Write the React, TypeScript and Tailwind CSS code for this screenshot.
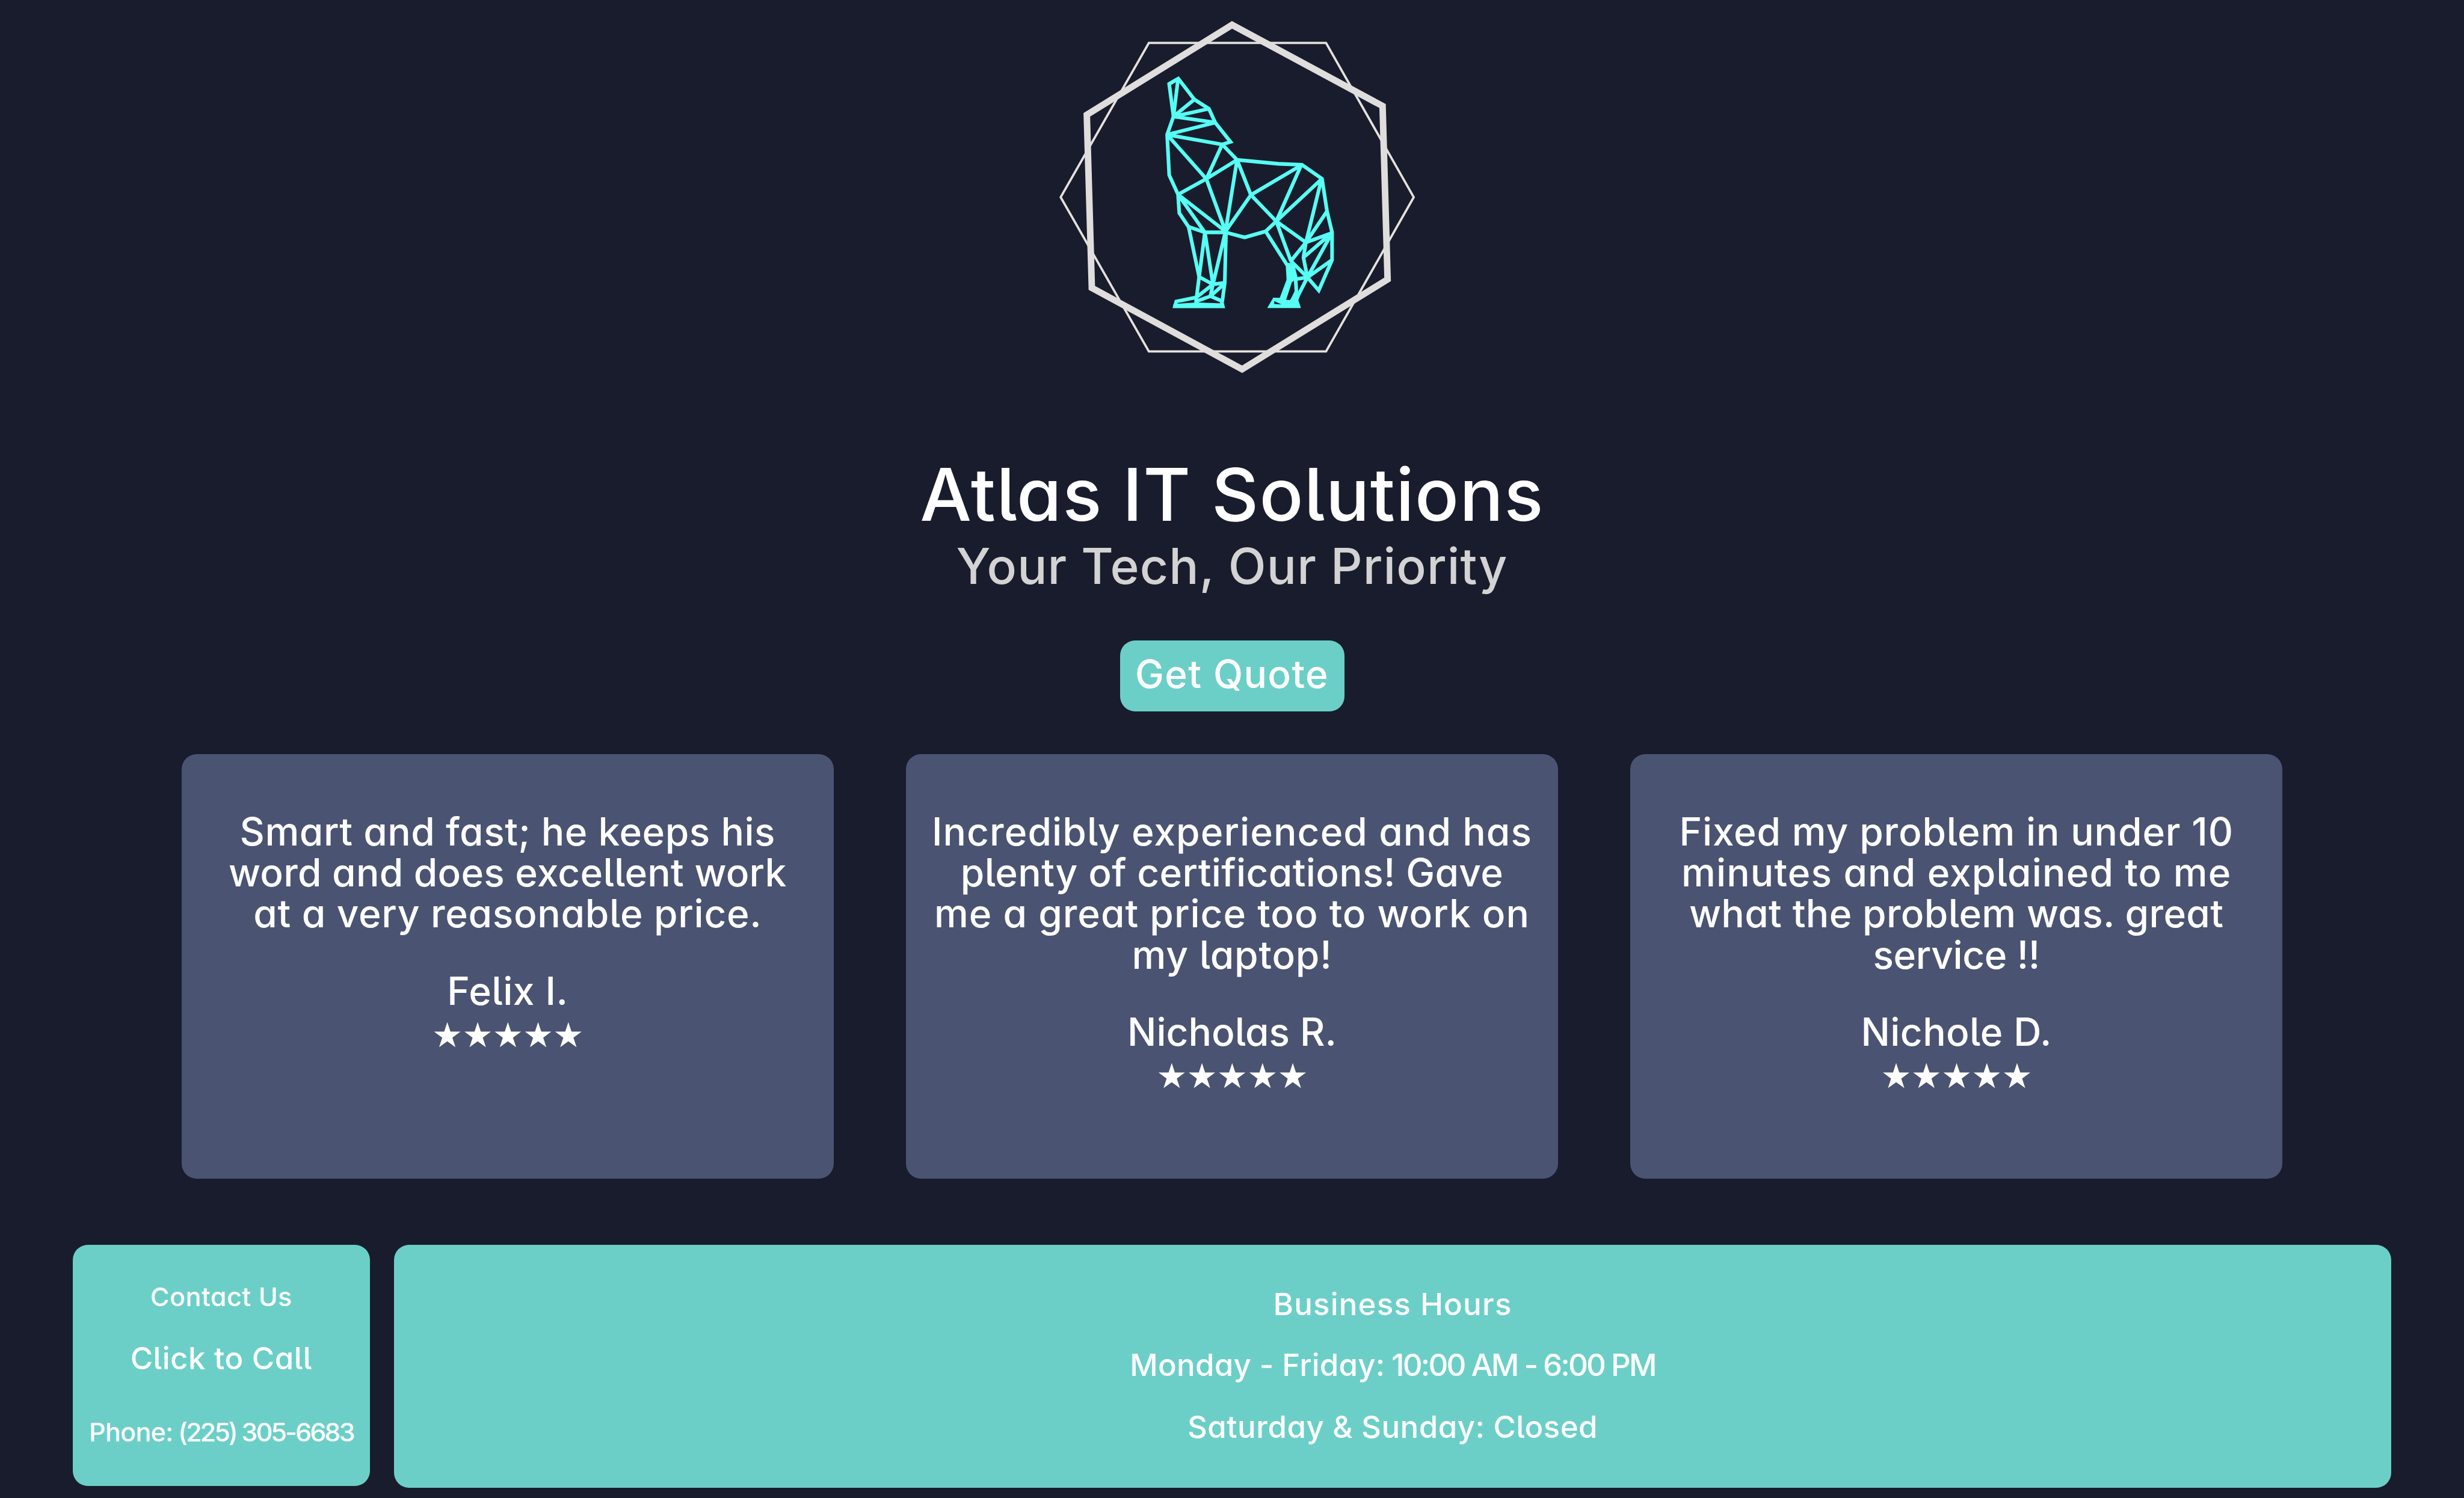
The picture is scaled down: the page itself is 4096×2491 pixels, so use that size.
type Line = { text: string; tracking: string };

type Review = { lines: Line[]; name: Line };

const reviews: Review[] = [
  {
    lines: [
      { text: "Smart and fast; he keeps his", tracking: "tracking-[0.53px]" },
      { text: "word and does excellent work", tracking: "tracking-[0.25px]" },
      { text: "at a very reasonable price.", tracking: "tracking-[0.7px]" },
    ],
    name: { text: "Felix I.", tracking: "tracking-[0.5px]" },
  },
  {
    lines: [
      { text: "Incredibly experienced and has", tracking: "tracking-[1.1px]" },
      { text: "plenty of certifications! Gave", tracking: "tracking-[0.35px]" },
      { text: "me a great price too to work on", tracking: "tracking-[1px]" },
      { text: "my laptop!", tracking: "tracking-[0.8px]" },
    ],
    name: { text: "Nicholas R.", tracking: "tracking-[0px]" },
  },
  {
    lines: [
      { text: "Fixed my problem in under 10", tracking: "tracking-[0.85px]" },
      { text: "minutes and explained to me", tracking: "tracking-[1.15px]" },
      { text: "what the problem was. great", tracking: "tracking-[0.35px]" },
      { text: "service !!", tracking: "tracking-[-0.4px]" },
    ],
    name: { text: "Nichole D.", tracking: "tracking-[0.4px]" },
  },
];

function WolfLogo() {
  return (
    <svg className="h-[655px] w-[655px]" viewBox="-22 0 1568 1568" fill="none" strokeMiterlimit={10}>
      <path d="M430 171H1135L1484 785L1135 1399H430L79 785Z" stroke="#e4e2dd" strokeWidth={9} />
      <path d="M761 99L1360 422L1380 1112L801 1470L203 1146L183 457Z" stroke="#dfdedc" strokeWidth={26} />
      <g stroke="#57fff4" strokeWidth={14.5} strokeLinejoin="bevel">
        {/* silhouette */}
        <path strokeLinejoin="miter" d="M510.7 334L547 313L611 396L669 433L694 488L755 565L722 575L781 636.5L945 652L1039 656L1119 711.6L1139 841L1159 925V1035L1106 1156L1061 1104" />
        <path strokeLinejoin="miter" d="M547 313L510.7 334L528 463.7L502.6 536L511 697L546 774L551 848L588 903L630 1102L620 1183" />
        <path d="M735 925L811 945L894.6 921L937 881" />
        {/* head and neck */}
        <path d="M546 316L528 463.7L611 396M669 433L528 463.7L694 488L502.6 536L722 575L658.7 712L502.6 536" />
        {/* torso */}
        <path d="M546 774L658.7 712L781 636.5L836 776L735 921L781 636.5M658.7 712L735 921L546 774L653 925L588 903M653 925H735" />
        <path d="M836 776L1036 658L937 881L836 776M1117 713L937 881L1055 965L1117 713" />
        {/* tail */}
        <path d="M1139 841L1055 965L1157 928L1045 1025L1061 1104L1157 930M1159 1035L1061 1104M1055 965L1045 1025" />
        {/* hind leg */}
        <path d="M894.6 921L980 1055M937 881L995 1039L1055 965M995 1039L1061 1104L1009 1112M1061 1104L1017 1190" />
        <path d="M1014 1110L1017 1160L998 1205" />
        {/* front leg */}
        <path d="M653 925L630 1102L685 1132L653 925M735 921L685 1132L732 1126L722 1201M737 921L732 1128M685 1132L620 1183M732 1128L675 1179L685 1132M675 1179L620 1199M675 1179L722 1199M618 1180V1212" />
        <path strokeLinejoin="miter" d="M622 1183L539 1200L534 1219H724L719 1197" />
      </g>
      <g fill="#57fff4" fillRule="evenodd">
        <path d="M528 1210L620 1204L722 1208L734 1226H525Z" />
        <path d="M974 1046L1008 1048L1022 1106L1002 1122L978 1114Z" />
        <path d="M980 1108L1001 1118L974 1200L950 1188Z" />
        <path d="M1006 1168L1030 1180L1022 1204L988 1202Z" />
        <path d="M925 1185L965 1186L978 1194L1025 1196L1035 1226H901ZM929 1199V1210L958 1212Z" />
      </g>
    </svg>
  );
}

function ReviewCard({ lines, name }: Review) {
  return (
    <article className="h-[705.4px] flex-1 rounded-[25px] bg-[#4a5371] pt-[95px] text-center text-[64px] leading-[68.1px]">
      {lines.map((line) => (
        <p key={line.text} className={line.tracking}>
          {line.text}
        </p>
      ))}
      <p className={`mt-[60px] ${name.tracking}`}>{name.text}</p>
      <p className="font-['DejaVu_Sans',sans-serif] text-[57px] font-normal leading-[78px] tracking-[-0.8px]">★★★★★</p>
    </article>
  );
}

export default function App() {
  return (
    <div className="flex h-[2491px] w-[4096px] flex-col items-center overflow-hidden whitespace-nowrap bg-[#191c2c] font-['Inter',sans-serif] font-[470] text-white [font-feature-settings:'cv05','cv11']">
      <WolfLogo />

      <h1 className="mt-[97.3px] text-[121px] leading-[140px] tracking-[1.25px]">Atlas IT Solutions</h1>
      <h2 className="text-[82px] leading-[100px] tracking-[1.1px] text-[#d3d3d3]">Your Tech, Our Priority</h2>

      <button className="mt-[73px] flex h-[118px] w-[373px] items-center justify-center rounded-[25px] bg-[#6bcfc8] pb-[6px] text-[64px] tracking-[1.4px]">
        Get Quote
      </button>

      <main className="mt-[71px] flex w-[3492px] gap-[120.5px]">
        {reviews.map((review) => (
          <ReviewCard key={review.name.text} {...review} />
        ))}
      </main>

      <footer className="mt-[110.8px] flex w-full items-start gap-[40px] px-[120.8px] text-center leading-[60px]">
        <section className="h-[400.7px] w-[494px] rounded-[25px] bg-[#6bcfc8] pt-[56px]">
          <p className="text-[43px] tracking-[0.6px]">Contact Us</p>
          <p className="mt-[43px] text-[51px] tracking-[0.5px]">Click to Call</p>
          <p className="mt-[61.5px] text-[43px] tracking-[-2.9px]">
            <span className="tracking-[-0.7px]">Phone:</span> (225) 305-6683
          </p>
        </section>
        <section className="h-[403.3px] flex-1 rounded-[25px] bg-[#6bcfc8] pt-[69px] text-[51px]">
          <p className="tracking-[1.2px]">Business Hours</p>
          <p className="mt-[40.8px] tracking-[-2.8px]">
            <span className="tracking-[0.2px]">Monday - Friday:</span> 10:00 AM - 6:00 PM
          </p>
          <p className="mt-[43.2px] tracking-[0.45px]">Saturday &amp; Sunday: Closed</p>
        </section>
      </footer>
    </div>
  );
}
